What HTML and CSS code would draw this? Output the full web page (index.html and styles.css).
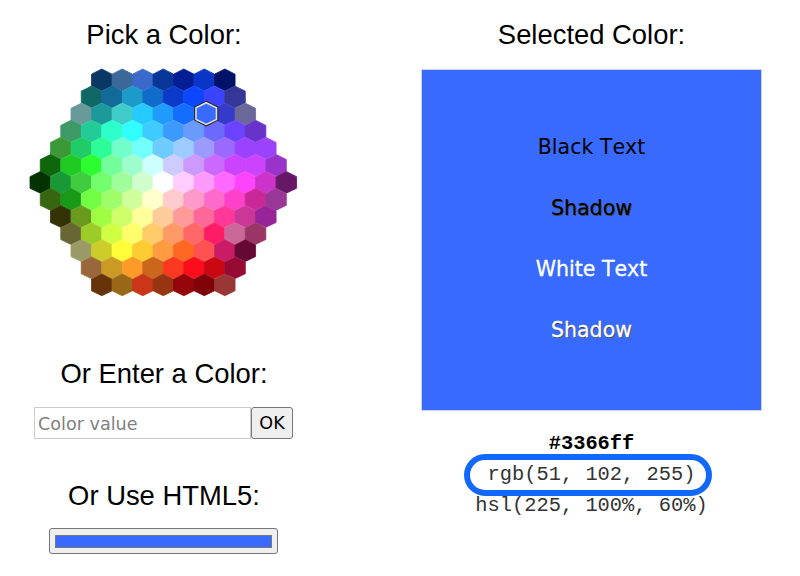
FILE: index.html
```html
<!DOCTYPE html>
<html lang="en">
<head>
    <meta charset="UTF-8">
    <meta name="viewport" content="width=device-width, initial-scale=1.0">
    <title>Color Picker</title>
    <link rel="stylesheet" href="styles.css">
</head>
<body>
    <div class="picker">
        <div class="pick-column">
            <h3>Pick a Color:</h3>
            <svg id="colormap" class="colormap" viewBox="0 0 234 199"></svg>

            <h3>Or Enter a Color:</h3>
            <form class="entercolor" onsubmit="return false">
                <input type="text" class="color-value" placeholder="Color value">
                <button type="submit" class="ok-btn">OK</button>
            </form>

            <h3>Or Use HTML5:</h3>
            <button type="button" class="html5-color"><span class="swatch"></span></button>
        </div>

        <div class="selected-column">
            <h3>Selected Color:</h3>
            <div class="selected-color">
                <span>Black Text</span>
                <span class="shadow">Shadow</span>
                <span class="white">White Text</span>
                <span class="white shadow">Shadow</span>
            </div>
            <div class="color-codes">
                <div class="hex">#3366ff</div>
                <div class="rgb">rgb(51, 102, 255)</div>
                <div class="hsl">hsl(225, 100%, 60%)</div>
            </div>
        </div>
    </div>

    <script src="colormap.js"></script>
</body>
</html>
```

FILE: styles.css
```css
body {
    margin: 0;
    background-color: #fff;
    color: #000;
    font-family: Verdana, "DejaVu Sans", sans-serif;
    font-kerning: none;
    overflow: hidden;
}
.picker {
    display: flex;
    gap: 93px;
    padding-top: 19px;
}
.pick-column {
    width: 328px;
    display: flex;
    flex-direction: column;
    align-items: center;
}
.selected-column {
    width: 341px;
    text-align: center;
}
h3 {
    margin: 0;
    font-family: Arial, "Liberation Sans", sans-serif;
    font-size: 27.4px;
    font-weight: 400;
    line-height: 32px;
    text-align: center;
}
.colormap {
    display: block;
    width: 266.6px;
    height: 226.7px;
    margin: 17.8px 1.4px 62.5px 0;
    overflow: visible;
}
.marker {
    fill: none;
    stroke: #222;
    stroke-width: 3.2;
}
.marker-inner {
    fill: #386bfd;
    stroke: #ddd;
    stroke-width: 1.4;
}
.entercolor {
    display: flex;
    width: 259px;
    height: 32px;
    margin: 17px 1px 41px 0;
}
.color-value {
    box-sizing: border-box;
    width: 217px;
    height: 32px;
    padding: 3px 3px 1px;
    border: 1px solid #ccc;
    font-family: inherit;
    font-size: 17.6px;
}
.color-value::placeholder {
    color: #808080;
}
.ok-btn {
    box-sizing: border-box;
    width: 42px;
    height: 32px;
    padding: 1px 0 0;
    border: 1px solid #767676;
    border-radius: 3px;
    background-color: #efefef;
    color: #000;
    font-family: inherit;
    font-size: 17.6px;
}
.html5-color {
    display: flex;
    box-sizing: border-box;
    width: 229px;
    height: 26px;
    margin: 16px 1px 0 0;
    padding: 6px 5px 5px;
    border: 1px solid #767676;
    border-radius: 3px;
    background-color: #efefef;
}
.swatch {
    flex: 1;
    border: 1px solid #777;
    background-color: #386bfd;
}
.selected-color {
    box-sizing: border-box;
    height: 342px;
    margin-top: 18px;
    padding-top: 47px;
    border: 1px solid #ccd3ea;
    background-color: #386bfd;
    font-size: 20.56px;
    line-height: 61px;
}
.selected-color span {
    display: block;
}
.white {
    color: #fff;
    -webkit-text-stroke: 0.3px #fff;
}
.shadow {
    text-shadow: 1px 1px 0 #444;
}
.color-codes {
    margin-top: 17px;
    color: #333;
    font-family: "Courier New", "Liberation Mono", monospace;
    font-size: 20.4px;
    line-height: 31px;
}
.hex {
    color: #000;
    font-weight: 700;
}
.rgb {
    position: relative;
}
.rgb::after {
    content: "";
    position: absolute;
    left: 43px;
    top: -5px;
    box-sizing: border-box;
    width: 248px;
    height: 42px;
    border: 6px solid #1268fb;
    border-radius: 21px;
}
```

FILE: colormap.js
```js
// One string per row of the hexagon, left to right
var rows = [
    "0a3766 3a6899 3b69cb 093699 041f96 0a36c8 021266",
    "0f6766 116a99 1c9aca 116bca 0a3aca 0c47fd 3a43fd 363699",
    "699999 1b9a99 40cdca 25cbfd 1f9bfd 156dfd 386bfd 353aca 696899",
    "3d9966 22cc99 2dffcb 2ffffe 3fcbfd 3c9afd 6b9afd 6a6bfd 6b42fd 6733ca",
    "3d9937 20cc67 2dfd99 71fecb 73fffe 6dccfd 9cccfd 9b9bfd 9b69fd 9a42fd 9a42fd",
    "0f660c 1fcb23 2bfd2f 73fd9b 9efecb ceffff cdccfe cc9afd cc69fd cc43fd cc43fd 9a33ca",
    "053202 199935 40cc3e 72fd6c 9ffd9c cffecc ffffff fecdfe ff9afd ff69fd fe43fd cb33ca 661766",
    "386610 189918 71fd43 9ffd6b cffe9b fffecc fecccc fe9acb fe6acb fe40cb ca2799 993799",
    "333204 699a1d 9ffd42 cffe6b fffe9b fecc9b fe9a9a fe6899 fe3999 ca3799 972499",
    "686734 9ccc28 cffe42 fffe6b fecc6b fe9a67 fe6868 fe1c66 ca6899 993666",
    "9a9a67 cccc2b fffe38 fecc32 fe9a40 fe6822 fe5152 ca1b66 650833",
    "99673a cb9a25 fe9b28 ca671b fd3820 fc0d1b ca0813 970a33",
    "653409 996816 ca3618 973511 96050c 7f040a 983736"
];

function hexagon(x, y, attrs) {
    var points = [[9, 0], [18, 4.5], [18, 14.7], [9, 19], [0, 14.7], [0, 4.5]];
    var str = points.map(p => (x + p[0]) + "," + (y + p[1])).join(" ");
    return '<polygon points="' + str + '" ' + attrs + '/>';
}

var html = "";
rows.forEach(function (row, r) {
    var colors = row.split(" ");
    var left = (13 - colors.length) * 9;
    colors.forEach(function (color, c) {
        var fill = "#" + color;
        html += hexagon(left + c * 18, r * 15, 'fill="' + fill + '" stroke="' + fill + '" stroke-width="0.7"');
    });
});
// marker on the selected color
html += hexagon(145.7, 29.6, 'class="marker"');
html += hexagon(145.7, 29.6, 'class="marker-inner"');
document.getElementById("colormap").innerHTML = html;
```
